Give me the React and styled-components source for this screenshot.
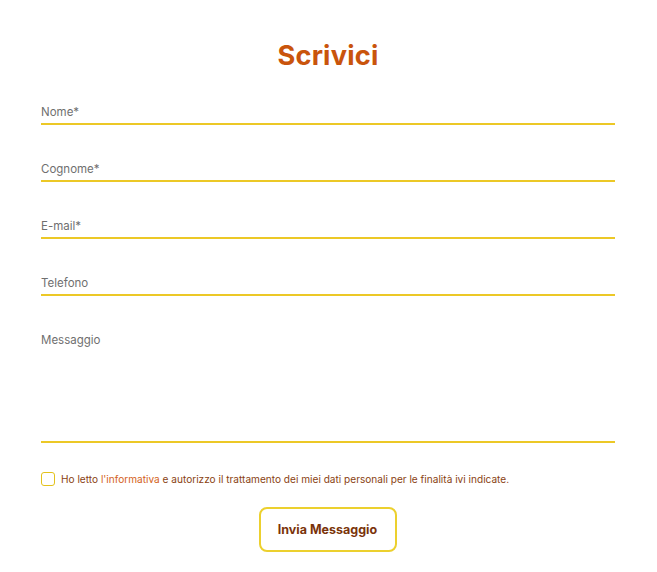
import React from "react";
import styled, { createGlobalStyle } from "styled-components";

const Global = createGlobalStyle`
  html, body { margin: 0; padding: 0; background: #fff; }
  body { font-family: "Rubik", Inter, "Noto Sans", sans-serif; }
  * { box-sizing: border-box; }
`;

const Page = styled.div`
  padding: 38px 42px 0 41px;
  display: flex;
  flex-direction: column;
`;

const Title = styled.h2`
  margin: 0;
  text-align: center;
  font-family: Inter, sans-serif;
  font-weight: 700;
  font-size: 27.2px;
  line-height: 36px;
  color: #c9540c;
  letter-spacing: 0.2px;
`;

const Form = styled.form`
  display: flex;
  flex-direction: column;
  margin-top: 30px;
`;

const Field = styled.label`
  display: flex;
  flex-direction: column;
  justify-content: flex-start;
  height: ${(p) => (p.$tall ? "111px" : "21px")};
  margin-top: ${(p) => (p.$first ? "0" : "36px")};
  border-bottom: 2px solid #ecc826;
`;

const Label = styled.span`
  font-family: Inter, sans-serif;
  font-size: 11.5px;
  line-height: 16px;
  color: #6f6f6f;
`;

const Consent = styled.div`
  display: flex;
  align-items: center;
  gap: 6px;
  margin-top: 29px;
`;

const Box = styled.span`
  width: 14px;
  height: 14px;
  border: 1.5px solid #e3c21c;
  border-radius: 3px;
  flex: none;
`;

const ConsentText = styled.span`
  font-family: Inter, sans-serif;
  font-size: 10.1px;
  line-height: 14px;
  color: #8a3f12;
`;

const Link = styled.a`
  color: #d4621b;
  text-decoration: none;
`;

const Button = styled.button`
  align-self: center;
  margin-top: 21px;
  margin-left: -1px;
  width: 138px;
  height: 45px;
  border: 2px solid #ecd02e;
  border-radius: 8px;
  background: #fff;
  font-family: Inter, sans-serif;
  font-weight: 700;
  font-size: 12.5px;
  color: #7a330a;
  cursor: pointer;
`;

export default function App() {
  return (
    <>
      <Global />
      <Page>
        <Title>Scrivici</Title>
        <Form>
          <Field $first><Label>Nome*</Label></Field>
          <Field><Label>Cognome*</Label></Field>
          <Field><Label>E-mail*</Label></Field>
          <Field><Label>Telefono</Label></Field>
          <Field $tall><Label>Messaggio</Label></Field>
          <Consent>
            <Box />
            <ConsentText>
              Ho letto <Link href="#">l'informativa</Link> e autorizzo il trattamento dei miei dati personali per le finalità ivi indicate.
            </ConsentText>
          </Consent>
          <Button type="button">Invia Messaggio</Button>
        </Form>
      </Page>
    </>
  );
}
